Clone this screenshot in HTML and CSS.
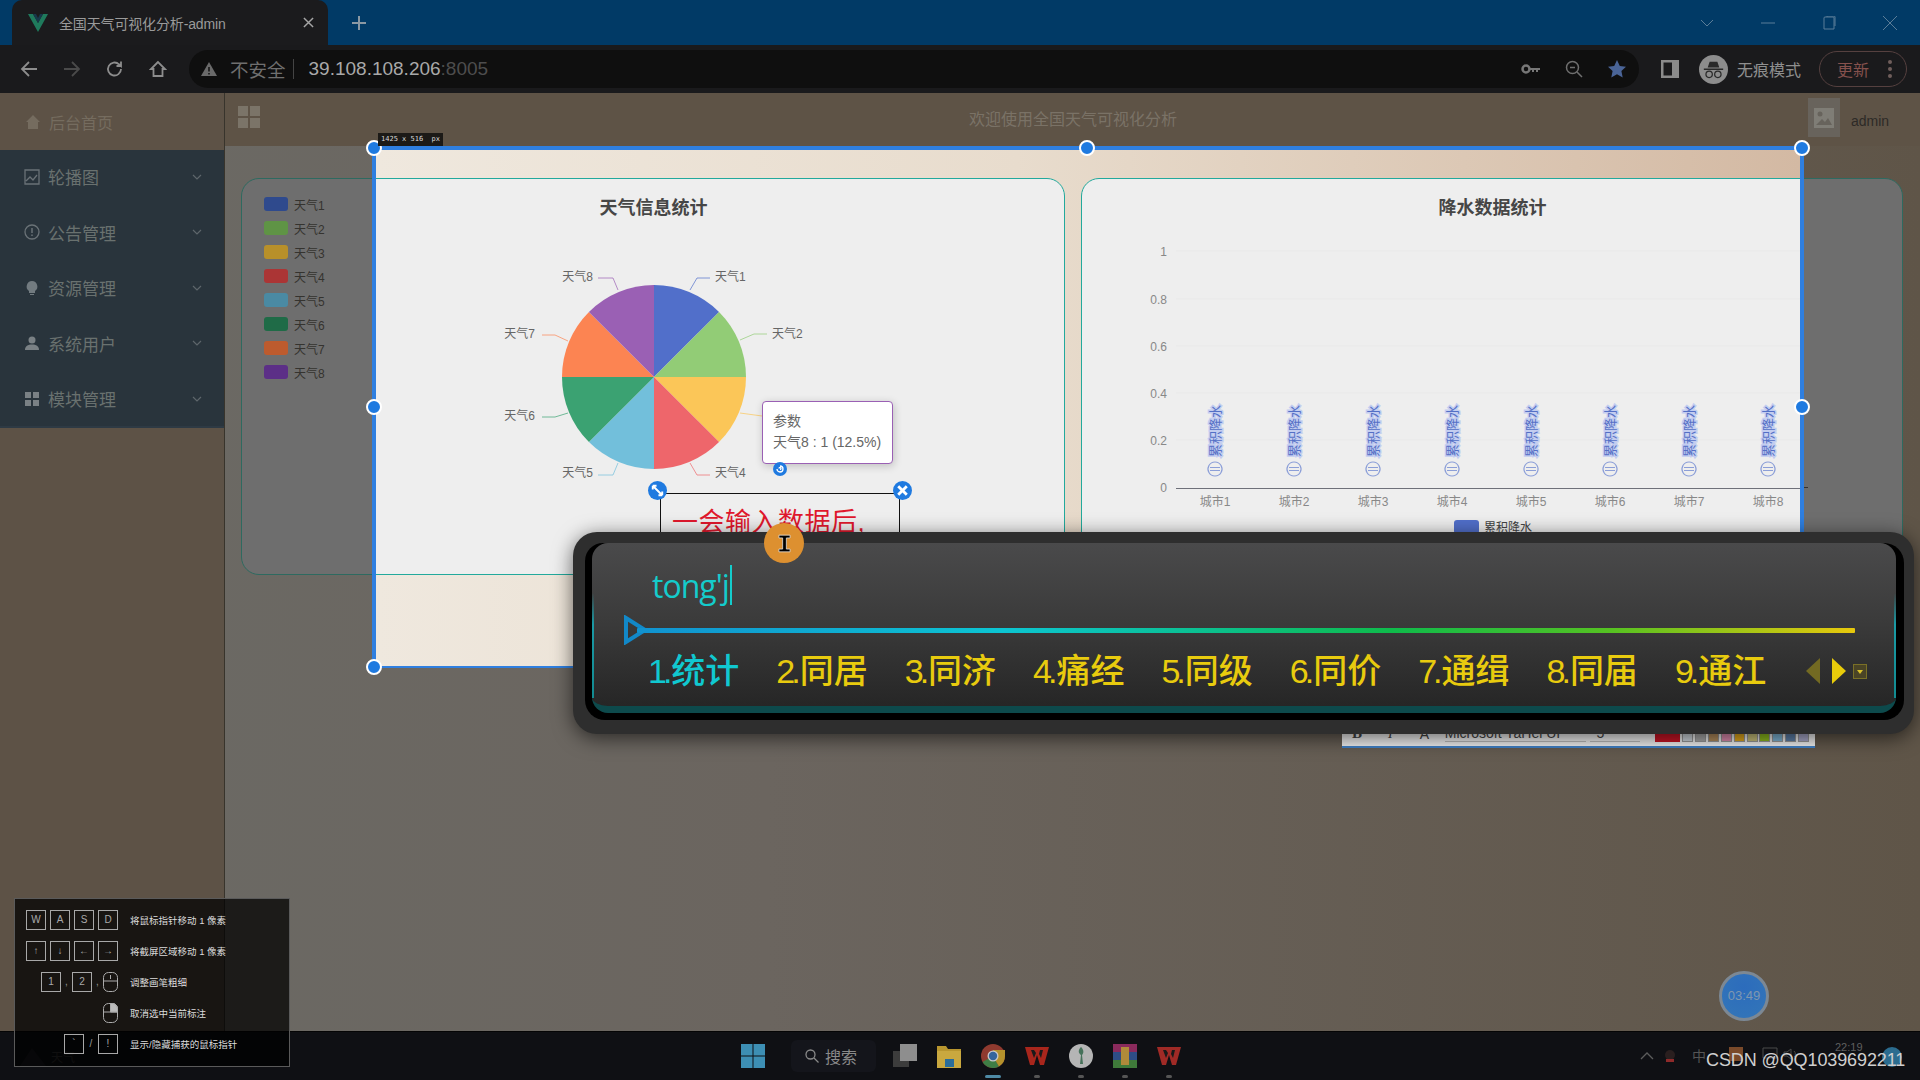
FILE: index.html
```
<!DOCTYPE html>
<html lang="zh-CN">
<head>
<meta charset="utf-8">
<title>全国天气可视化分析-admin</title>
<link rel="stylesheet" href="styles.css">
</head>
<body>
<div class="shell">
  <header class="tabbar">
    <div class="tab">
      <svg class="favicon" viewBox="0 0 20 20"><path d="M0 1h5l5 9 5-9h5L10 19z" fill="#1f7a5c"/><path d="M5 1h3l2 4 2-4h3l-5 9z" fill="#17394a"/></svg>
      <span class="tab-title">全国天气可视化分析-admin</span>
      <svg class="tab-close" viewBox="0 0 12 12"><path d="M1 1l10 10M11 1L1 11"/></svg>
    </div>
    <svg class="tab-plus" viewBox="0 0 16 16"><path d="M8 1v14M1 8h14"/></svg>
    <div class="winctl">
      <svg viewBox="0 0 14 14"><path d="M1 4l6 6 6-6"/></svg>
      <svg viewBox="0 0 14 14"><path d="M0 7h14"/></svg>
      <svg viewBox="0 0 14 14"><path d="M3 1h8a1 1 0 0 1 1 1v11H2V2a1 1 0 0 1 1-1zM5 1V0h7a1 1 0 0 1 1 1v9"/></svg>
      <svg viewBox="0 0 14 14"><path d="M0 0l14 14M14 0L0 14"/></svg>
    </div>
  </header>

  <div class="toolbar">
    <div class="navbtn"><svg viewBox="0 0 18 18"><path d="M17 9H2M9 2L2 9l7 7"/></svg></div>
    <div class="navbtn off"><svg viewBox="0 0 18 18"><path d="M1 9h15M9 2l7 7-7 7"/></svg></div>
    <div class="navbtn"><svg viewBox="0 0 18 18"><path d="M15 9a6.500 6.500 0 1 1-2-4.700L15 6V1.500M15 6h-4.500"/></svg></div>
    <div class="navbtn"><svg viewBox="0 0 18 18"><path d="M9 2L2 9h2.500v7h9V9H16z"/></svg></div>
    <div class="omni">
      <svg class="warn" viewBox="0 0 16 16"><path d="M8 1l8 14H0z" fill="#6a6a6a"/><path d="M8 6v4.500M8 12v1.500" stroke="#111" stroke-width="1.500"/></svg>
      <span class="insecure">不安全</span>
      <i class="omni-sep"></i>
      <span class="host">39.108.108.206</span><span class="port">:8005</span>
      <div class="omni-right">
        <svg class="ic-key" viewBox="0 0 20 12"><circle cx="5" cy="6" r="3.500" fill="none" stroke="#777" stroke-width="2.500"/><path d="M9 5h10v2h-2v2h-2V7h-2v2h-2V7H9z" fill="#777"/></svg>
        <svg class="ic-zoom" viewBox="0 0 18 18"><circle cx="7.500" cy="7.500" r="6"/><path d="M12 12l5 5M5 7.500h5"/></svg>
        <svg class="ic-star" viewBox="0 0 20 20"><path d="M10 1l2.800 6 6.200.7-4.600 4.300 1.300 6.500L10 15.200 4.300 18.500 5.600 12 1 7.700 7.200 7z" fill="#4a6497"/></svg>
      </div>
    </div>
    <svg class="ic-panel" viewBox="0 0 18 18"><path d="M0 0h18v18H0z M2.500 2.500v13H11v-13z" fill="#8b8b8b" fill-rule="evenodd"/></svg>
    <svg class="ic-incog" viewBox="0 0 30 30"><circle cx="15" cy="15" r="15" fill="#8d8d8d"/><path d="M9 13l2-6h8l2 6zM5 14h20v1.500H5z" fill="#2a2a2a"/><circle cx="10.500" cy="20" r="3.300" fill="none" stroke="#2a2a2a" stroke-width="1.300"/><circle cx="19.500" cy="20" r="3.300" fill="none" stroke="#2a2a2a" stroke-width="1.300"/></svg>
    <span class="incog-label">无痕模式</span>
    <div class="update"><span>更新</span><i class="kebab"></i></div>
  </div>

  <div class="page">
    <aside class="sidebar">
      <div class="home-item">
        <svg class="side-ic" viewBox="0 0 16 16"><path d="M8 1L1 8h2v7h10V8h2z" fill="#756c5f"/></svg>
        <span>后台首页</span>
      </div>
      <nav class="menu">
        <div class="menu-item">
          <svg class="side-ic" viewBox="0 0 16 16"><path d="M1 1h14v14H1zM2 12l4-4 3 3 4-5" fill="none" stroke="#6a7277" stroke-width="1.300"/></svg>
          <span>轮播图</span>
          <svg class="chev" viewBox="0 0 10 6"><path d="M1 1l4 4 4-4"/></svg>
        </div>
        <div class="menu-item">
          <svg class="side-ic" viewBox="0 0 16 16"><circle cx="8" cy="8" r="7" fill="none" stroke="#6a7277" stroke-width="1.300"/><path d="M8 4v5M8 10.500V12" stroke="#6a7277" stroke-width="1.500"/></svg>
          <span>公告管理</span>
          <svg class="chev" viewBox="0 0 10 6"><path d="M1 1l4 4 4-4"/></svg>
        </div>
        <div class="menu-item">
          <svg class="side-ic" viewBox="0 0 16 16"><path d="M8 1a5.500 5.500 0 0 0-3 10v2h6v-2A5.500 5.500 0 0 0 8 1zM6 14h4v1H6z" fill="#727b80"/></svg>
          <span>资源管理</span>
          <svg class="chev" viewBox="0 0 10 6"><path d="M1 1l4 4 4-4"/></svg>
        </div>
        <div class="menu-item">
          <svg class="side-ic" viewBox="0 0 16 16"><circle cx="8" cy="5" r="3.500" fill="#7a8185"/><path d="M1 15c0-4 3-5.500 7-5.500s7 1.500 7 5.500z" fill="#7a8185"/></svg>
          <span>系统用户</span>
          <svg class="chev" viewBox="0 0 10 6"><path d="M1 1l4 4 4-4"/></svg>
        </div>
        <div class="menu-item">
          <svg class="side-ic" viewBox="0 0 16 16"><path d="M1 1h6v6H1zM9 1h6v6H9zM1 9h6v6H1zM9 9h6v6H9z" fill="#7a8185"/></svg>
          <span>模块管理</span>
          <svg class="chev" viewBox="0 0 10 6"><path d="M1 1l4 4 4-4"/></svg>
        </div>
      </nav>
    </aside>

    <main class="main">
      <div class="topbar">
        <svg class="grid-ic" viewBox="0 0 22 22"><path d="M0 0h10v10H0zM12 0h10v10H12zM0 12h10v10H0zM12 12h10v10H12z" fill="#7b7468"/></svg>
        <div class="welcome">欢迎使用全国天气可视化分析</div>
        <div class="avatar"><svg viewBox="0 0 20 20"><path d="M0 0h20v20H0z" fill="#7f7d76"/><circle cx="6" cy="6" r="2.500" fill="#67635c"/><path d="M2 17l6-6 3 3 3-4 4 7z" fill="#67635c"/></svg></div>
        <span class="admin">admin</span>
      </div>
      <div class="cards">
        <section class="card">
          <ul class="legend">
            <li><i class="sw s1"></i>天气1</li>
            <li><i class="sw s2"></i>天气2</li>
            <li><i class="sw s3"></i>天气3</li>
            <li><i class="sw s4"></i>天气4</li>
            <li><i class="sw s5"></i>天气5</li>
            <li><i class="sw s6"></i>天气6</li>
            <li><i class="sw s7"></i>天气7</li>
            <li><i class="sw s8"></i>天气8</li>
          </ul>
        </section>
        <section class="card"></section>
      </div>
    </main>
  </div>

  <footer class="taskbar">
    <div class="weather">
      <svg viewBox="0 0 26 20"><path d="M0 20L12 2l14 18z" fill="#1c1d24"/></svg>
      <span>天气</span>
    </div>
    <svg class="win" viewBox="0 0 24 24"><path d="M0 0h11.500v11.500H0zM12.500 0H24v11.500H12.500zM0 12.500h11.500V24H0zM12.500 12.500H24V24H12.500z" fill="#3d8fb4"/></svg>
    <div class="search">
      <svg viewBox="0 0 14 14"><circle cx="5.500" cy="5.500" r="4.500"/><path d="M9 9l4.500 4.500"/></svg>
      <span>搜索</span>
    </div>
    <div class="tb-icons">
      <div class="tb-app"><svg viewBox="0 0 24 24"><path d="M0 7h16v16H0z" fill="#3c3c3c"/><path d="M7 0h17v17H7z" fill="#8e8e8e"/></svg></div>
      <div class="tb-app"><svg viewBox="0 0 24 24"><path d="M0 2h9l2 3h13v19H0z" fill="#b8962f"/><path d="M0 7h24v17H0z" fill="#c9a83f"/><path d="M8 15h9v8H8z" fill="#2a6d9a"/></svg></div>
      <div class="tb-app on"><svg viewBox="0 0 24 24"><circle cx="12" cy="12" r="12" fill="#8f3a2f"/><path d="M12 12L1.600 18A12 12 0 0 0 18 22.400z" fill="#3f7d45"/><path d="M12 12l6 10.400A12 12 0 0 0 24 12V6H12z" fill="#b5922c"/><circle cx="12" cy="12" r="5.500" fill="#c9c9c9"/><circle cx="12" cy="12" r="4.200" fill="#35659c"/></svg></div>
      <div class="tb-app dot"><svg viewBox="0 0 24 24"><path d="M0 3h24l-5 18h-4l-3-10-3 10H5z" fill="#a8261c"/><path d="M6 6l3 8 2-5-2-3zM18 6h-3l-1 4 2 4z" fill="#1a1a1a"/></svg></div>
      <div class="tb-app dot"><svg viewBox="0 0 24 24"><circle cx="12" cy="12" r="12" fill="#b5b5b5"/><path d="M12 3c3 3 3 6 1 8l1 9h-3l1-9c-3-2-3-5 0-8z" fill="#46725a"/></svg></div>
      <div class="tb-app dot"><svg viewBox="0 0 24 24"><path d="M0 0h24v8H0z" fill="#8a2a5c"/><path d="M0 8h24v8H0z" fill="#2e4d86"/><path d="M0 16h24v8H0z" fill="#3f7a3a"/><path d="M8 3h8v18H8z" fill="#b08a3a"/></svg></div>
      <div class="tb-app dot"><svg viewBox="0 0 24 24"><path d="M0 3h24l-5 18h-4l-3-10-3 10H5z" fill="#a02a26"/><path d="M6 6l3 8 2-5-2-3zM18 6h-3l-1 4 2 4z" fill="#1a1a1a"/></svg></div>
    </div>
    <div class="tray">
      <svg class="caret" viewBox="0 0 14 8"><path d="M1 7l6-6 6 6"/></svg>
      <svg class="t-qq" viewBox="0 0 14 14"><circle cx="7" cy="6" r="5" fill="#2a1f1f"/><path d="M3 10h8v3H3z" fill="#8f2a2a"/></svg>
      <span class="t-ime">中</span>
      <svg class="t-sq" viewBox="0 0 14 14"><path d="M0 0h14v14H0z" fill="#7a4a2a"/></svg>
      <svg class="t-mon" viewBox="0 0 16 14"><path d="M1 1h14v10H1z"/></svg>
      <svg class="t-vol" viewBox="0 0 16 14"><path d="M1 5h3l4-3v10L4 9H1zM11 4a4 4 0 0 1 0 6"/></svg>
      <span class="t-time">22:19</span>
      <span class="t-badge"></span>
    </div>
  </footer>

  <div class="selection">
    <div class="clip">
      <div class="bright">
        <section class="bcard">
          <h2 class="ctitle">天气信息统计</h2>
          <svg class="chart" viewBox="0 0 823 397">
            <path d="M412 199L412 107A92 92 0 0 1 477.050 133.950Z" fill="#516fca"/>
            <path d="M412 199L477.050 133.950A92 92 0 0 1 504 199Z" fill="#92cc76"/>
            <path d="M412 199L504 199A92 92 0 0 1 477.050 264.050Z" fill="#fbc658"/>
            <path d="M412 199L477.050 264.050A92 92 0 0 1 412 291Z" fill="#ee666b"/>
            <path d="M412 199L412 291A92 92 0 0 1 346.950 264.050Z" fill="#72bfdb"/>
            <path d="M412 199L346.950 264.050A92 92 0 0 1 320 199Z" fill="#3ba272"/>
            <path d="M412 199L320 199A92 92 0 0 1 346.950 133.950Z" fill="#fc8452"/>
            <path d="M412 199L346.950 133.950A92 92 0 0 1 412 107Z" fill="#9a60b4"/>
            <g class="leaders">
              <path d="M448 112L455 100H468" stroke="#516fca"/>
              <path d="M498 162L512 156H525" stroke="#92cc76"/>
              <path d="M498 235L520 238" stroke="#fbc658"/>
              <path d="M448 285L455 297H468" stroke="#ee666b"/>
              <path d="M376 285L371 297H356" stroke="#72bfdb"/>
              <path d="M326 235L313 239H300" stroke="#3ba272"/>
              <path d="M326 163L313 157H300" stroke="#fc8452"/>
              <path d="M376 112L371 100H356" stroke="#9a60b4"/>
            </g>
            <g class="plabels">
              <text x="473" y="103">天气1</text>
              <text x="530" y="160">天气2</text>
              <text x="473" y="299">天气4</text>
              <text x="351" y="299" text-anchor="end">天气5</text>
              <text x="293" y="242" text-anchor="end">天气6</text>
              <text x="293" y="160" text-anchor="end">天气7</text>
              <text x="351" y="103" text-anchor="end">天气8</text>
            </g>
          </svg>
        </section>
        <section class="bcard">
          <h2 class="ctitle">降水数据统计</h2>
          <svg class="chart" viewBox="0 0 823 397">
            <g class="gridl">
              <path d="M95 73H727M95 121H727M95 168H727M95 215H727M95 262H727"/>
            </g>
            <path class="axis" d="M95 310.500H727"/>
            <g class="ylabels">
              <text x="86" y="78">1</text>
              <text x="86" y="126">0.8</text>
              <text x="86" y="173">0.6</text>
              <text x="86" y="220">0.4</text>
              <text x="86" y="267">0.2</text>
              <text x="86" y="314">0</text>
            </g>
            <g class="xlabels">
              <text x="134" y="328">城市1</text>
              <text x="213" y="328">城市2</text>
              <text x="292" y="328">城市3</text>
              <text x="371" y="328">城市4</text>
              <text x="450" y="328">城市5</text>
              <text x="529" y="328">城市6</text>
              <text x="608" y="328">城市7</text>
              <text x="687" y="328">城市8</text>
            </g>
            <g class="barlabels">
              <text transform="translate(139 279) rotate(-90)">累积降水</text>
              <text transform="translate(218 279) rotate(-90)">累积降水</text>
              <text transform="translate(297 279) rotate(-90)">累积降水</text>
              <text transform="translate(376 279) rotate(-90)">累积降水</text>
              <text transform="translate(455 279) rotate(-90)">累积降水</text>
              <text transform="translate(534 279) rotate(-90)">累积降水</text>
              <text transform="translate(613 279) rotate(-90)">累积降水</text>
              <text transform="translate(692 279) rotate(-90)">累积降水</text>
            </g>
            <g class="zeros">
              <path d="M134 284a7 7 0 1 0 .01 0zM129 289.500h10M129 292.500h10"/>
              <path d="M213 284a7 7 0 1 0 .01 0zM208 289.500h10M208 292.500h10"/>
              <path d="M292 284a7 7 0 1 0 .01 0zM287 289.500h10M287 292.500h10"/>
              <path d="M371 284a7 7 0 1 0 .01 0zM366 289.500h10M366 292.500h10"/>
              <path d="M450 284a7 7 0 1 0 .01 0zM445 289.500h10M445 292.500h10"/>
              <path d="M529 284a7 7 0 1 0 .01 0zM524 289.500h10M524 292.500h10"/>
              <path d="M608 284a7 7 0 1 0 .01 0zM603 289.500h10M603 292.500h10"/>
              <path d="M687 284a7 7 0 1 0 .01 0zM682 289.500h10M682 292.500h10"/>
            </g>
            <rect x="373" y="342" width="25" height="14" rx="3" fill="#516fca"/>
            <text class="blegend" x="403" y="354">累积降水</text>
          </svg>
        </section>
      </div>
    </div>
    <i class="h h-tl"></i><i class="h h-t"></i><i class="h h-tr"></i>
    <i class="h h-l"></i><i class="h h-r"></i><i class="h h-bl"></i>
    <i class="axis-tail"></i>
    <span class="sizetag">1425 x 516&nbsp;&nbsp;px</span>
  </div>

  <div class="tooltip">
    <div>参数</div>
    <div>天气8 : 1 (12.5%)</div>
  </div>
  <svg class="swirl" viewBox="0 0 14 14"><circle cx="7" cy="7" r="7" fill="#1f7ae0"/><path d="M7 4a3 3 0 1 1-3 3M7 7.500a1 1 0 1 0-1-1" fill="none" stroke="#fff" stroke-width="1.300"/></svg>

  <div class="note">
    <span>一会输入数据后,</span>
    <svg class="note-h nh-l" viewBox="0 0 20 20"><circle cx="10" cy="10" r="10" fill="#1f7ae0"/><path d="M5 5l10 10M5 5h4M5 5v4M15 15h-4M15 15v-4" stroke="#fff" stroke-width="2" fill="none"/></svg>
    <svg class="note-h nh-r" viewBox="0 0 20 20"><circle cx="10" cy="10" r="10" fill="#1f7ae0"/><path d="M5.500 5.500l9 9M14.500 5.500l-9 9" stroke="#fff" stroke-width="3"/></svg>
  </div>

  <div class="anno-tools">
    <b class="at-b">B</b><i class="at-i">I</i><span class="at-a">A</span>
    <span class="at-font">Microsoft YaHei UI</span>
    <span class="at-size">5</span>
    <span class="at-red"></span>
    <span class="at-c c1"></span><span class="at-c c2"></span><span class="at-c c3"></span><span class="at-c c4"></span><span class="at-c c5"></span><span class="at-c c6"></span><span class="at-c c7"></span><span class="at-c c8"></span><span class="at-c c9"></span><span class="at-c c10"></span>
  </div>

  <div class="ime">
    <div class="ime-trim">
      <div class="ime-face">
        <div class="ime-input"><span>tong'j</span><i class="caret-bar"></i></div>
        <div class="ime-rule">
          <svg viewBox="0 0 24 30"><path d="M2 3l19 12L2 27z" fill="none" stroke="#1288c8" stroke-width="4"/></svg>
          <i class="ime-line"></i>
        </div>
        <div class="ime-cands">
          <span class="cand first"><em>1.</em>统计</span>
          <span class="cand"><em>2.</em>同居</span>
          <span class="cand"><em>3.</em>同济</span>
          <span class="cand"><em>4.</em>痛经</span>
          <span class="cand"><em>5.</em>同级</span>
          <span class="cand"><em>6.</em>同价</span>
          <span class="cand"><em>7.</em>通缉</span>
          <span class="cand"><em>8.</em>同届</span>
          <span class="cand"><em>9.</em>通江</span>
          <div class="ime-pager">
            <i class="pg-l"></i><i class="pg-r"></i>
            <i class="pg-menu"></i>
          </div>
        </div>
      </div>
    </div>
  </div>

  <div class="pointer">
    <svg viewBox="0 0 14 20"><path d="M1 1h12v3H9v12h4v3H1v-3h4V4H1z" fill="#000" stroke="#e8e8e8" stroke-width=".8"/></svg>
  </div>

  <div class="keys">
    <div class="k-row"><div class="k-col"><kbd>W</kbd><kbd>A</kbd><kbd>S</kbd><kbd>D</kbd></div><span>将鼠标指针移动 1 像素</span></div>
    <div class="k-row"><div class="k-col"><kbd>↑</kbd><kbd>↓</kbd><kbd>←</kbd><kbd>→</kbd></div><span>将截屏区域移动 1 像素</span></div>
    <div class="k-row"><div class="k-col"><kbd>1</kbd><b>,</b><kbd>2</kbd><b>,</b><svg class="mouse" viewBox="0 0 15 20"><rect x=".5" y=".5" width="14" height="19" rx="5"/><path d="M.5 9h14M7.500 3v4"/></svg></div><span>调整画笔粗细</span></div>
    <div class="k-row"><div class="k-col"><svg class="mouse" viewBox="0 0 15 20"><path d="M7.500.5h2a5 5 0 0 1 5 5V9h-7z" fill="#bbb"/><rect x=".5" y=".5" width="14" height="19" rx="5"/><path d="M.5 9h14M7.500 .5V9"/></svg></div><span>取消选中当前标注</span></div>
    <div class="k-row"><div class="k-col"><kbd>`</kbd><b class="slash">/</b><kbd>!</kbd></div><span>显示/隐藏捕获的鼠标指针</span></div>
  </div>

  <div class="timer">03:49</div>
  <div class="watermark">CSDN @QQ1039692211</div>
</div>
</body>
</html>
```
FILE: styles.css
```
* { box-sizing: border-box; }
html, body { margin: 0; padding: 0; background: #5e5346; }
body { overflow: hidden; font-family: "Liberation Sans", "Noto Sans CJK SC", sans-serif; }
ul { margin: 0; padding: 0; list-style: none; }
svg { display: block; flex: none; }
.shell { position: relative; width: 1920px; height: 1080px; display: flex; flex-direction: column; overflow: hidden; }

/* browser chrome */
.tabbar { height: 45px; flex: none; background: #013a66; display: flex; align-items: flex-end; padding-left: 12px; }
.tab { width: 316px; height: 45px; background: #1b1b1d; border-radius: 10px 10px 0 0; display: flex; align-items: center; padding: 0 14px 0 16px; }
.favicon { width: 20px; height: 20px; margin-right: 11px; }
.tab-title { color: #9a9a9a; font-size: 14px; letter-spacing: -.15px; white-space: nowrap; flex: 1; }
.tab-close { width: 11px; height: 11px; stroke: #a5a5a5; stroke-width: 1.600; fill: none; }
.tab-plus { width: 16px; height: 16px; margin: 0 0 14px 23px; stroke: #8b98a3; stroke-width: 2; fill: none; }
.winctl { margin-left: auto; display: flex; gap: 47px; align-self: center; padding-right: 23px; }
.winctl svg { width: 14px; height: 14px; stroke: #5b7d98; fill: none; stroke-width: 1; }
.toolbar { height: 48px; flex: none; background: #1a1a1c; display: flex; align-items: center; padding-left: 7px; }
.navbtn { width: 43px; display: flex; justify-content: center; }
.navbtn svg { width: 18px; height: 18px; stroke: #8d8d8d; fill: none; stroke-width: 1.800; }
.navbtn.off svg { stroke: #4a4a4a; }
.omni { width: 1450px; height: 38px; margin-left: 10px; border-radius: 19px; background: #0f0f0f; display: flex; align-items: center; padding-left: 12px; }
.warn { width: 16px; height: 16px; margin-right: 13px; }
.insecure { font-size: 18.500px; color: #6f6f6f; }
.omni-sep { width: 1px; height: 20px; background: #444; margin: 0 15px 0 7px; }
.host { font-size: 19px; color: #a9a9a9; }
.port { font-size: 19px; color: #4d4d4d; }
.omni-right { margin-left: auto; display: flex; align-items: center; gap: 24px; padding-right: 12px; }
.ic-key { width: 20px; height: 12px; }
.ic-zoom { width: 18px; height: 20px; stroke: #6f6f6f; fill: none; stroke-width: 1.500; }
.ic-star { width: 20px; height: 20px; }
.ic-panel { width: 18px; height: 20px; margin-left: 22px; }
.ic-incog { width: 29px; height: 29px; margin-left: 20px; }
.incog-label { color: #8f8f8f; font-size: 16px; margin-left: 9px; white-space: nowrap; }
.update { width: 88px; height: 36px; margin-left: 18px; border: 1.500px solid #55403f; border-radius: 18px; display: flex; align-items: center; padding-left: 17px; color: #85514d; font-size: 16px; position: relative; }
.kebab { width: 4px; height: 4px; border-radius: 50%; background: #6f5e5b; margin-left: 19px; box-shadow: 0 -7px #6f5e5b, 0 7px #6f5e5b; }

/* page */
.page { flex: 1; min-height: 0; display: flex; background: linear-gradient(90deg, #6b6a65 0%, #6b655f 40%, #5f5548 100%); }
.sidebar { width: 225px; flex: none; background: #5d5246; border-right: 1px solid #38342c; }
.home-item { height: 57px; display: flex; align-items: center; padding-left: 25px; color: #756c5f; font-size: 16px; gap: 8px; }
.side-ic { width: 16px; height: 16px; }
.menu { background: #29343c; height: 278px; margin-top: 0; box-shadow: inset 0 -2px #2e3a44; }
.menu-item { height: 55.500px; display: flex; align-items: center; padding: 0 22px 2px 24px; color: #69716f; font-size: 17px; gap: 8px; }
.menu-item span { flex: 1; }
.chev { width: 10px; height: 6px; stroke: #5e666b; fill: none; stroke-width: 1.200; }
.main { flex: 1; min-width: 0; display: flex; flex-direction: column; }
.topbar { height: 53px; flex: none; background: #5e5346; display: flex; align-items: center; position: relative; padding-left: 13px; }
.grid-ic { width: 22px; height: 22px; margin-top: -6px; }
.welcome { position: absolute; left: 1px; right: 0; text-align: center; color: #7a7266; font-size: 16px; margin-top: -4px; }
.avatar { position: absolute; left: 1583px; top: 5px; width: 32px; height: 39px; background: #68635c; display: flex; align-items: center; justify-content: center; }
.avatar svg { width: 20px; height: 20px; }
.admin { position: absolute; left: 1626px; top: 20px; color: #2d2a27; font-size: 14px; }
.cards { display: grid; grid-template-columns: 823px 823px; column-gap: 16px; padding: 32px 0 0 16px; }
.card { height: 397px; background: #6e6e6e; border: 1px solid #2e6a60; border-radius: 18px; }
.legend { padding: 13px 0 0 22px; display: flex; flex-direction: column; }
.legend li { height: 24px; display: flex; align-items: center; font-size: 12px; color: #35332f; gap: 6px; }
.sw { width: 24px; height: 14px; border-radius: 3px; display: block; }
.s1 { background: #2f4a8d; } .s2 { background: #5f9445; } .s3 { background: #b8902a; } .s4 { background: #ab3535; }
.s5 { background: #4a8aa3; } .s6 { background: #1f6b47; } .s7 { background: #bd5b2e; } .s8 { background: #5c2f87; }

/* taskbar */
.taskbar { height: 49px; flex: none; background: #0f1014; display: flex; align-items: center; border-top: 1px solid #050505; position: relative; }
.weather { width: 741px; flex: none; display: flex; align-items: center; gap: 5px; padding-left: 20px; color: #3a3a3a; font-size: 12px; }
.weather svg { width: 26px; height: 20px; }
.win { width: 24px; height: 24px; }
.search { width: 85px; height: 32px; margin-left: 26px; border-radius: 6px; background: #14151b; display: flex; align-items: center; gap: 6px; padding-left: 14px; color: #8a8a8a; font-size: 16px; }
.search svg { width: 14px; height: 14px; stroke: #8a8a8a; fill: none; stroke-width: 1.300; }
.tb-icons { display: flex; gap: 20px; margin-left: 17px; }
.tb-app { width: 24px; height: 24px; position: relative; }
.tb-app svg { width: 24px; height: 24px; }
.tb-app.on::after { content: ""; position: absolute; left: 4px; right: 4px; bottom: -10px; height: 3px; border-radius: 2px; background: #4e8aa5; }
.tb-app.dot::after { content: ""; position: absolute; left: 9px; right: 9px; bottom: -10px; height: 3px; border-radius: 2px; background: #555; }
.tray { position: absolute; left: 1640px; top: 0; bottom: 0; width: 280px; display: flex; align-items: center; }
.caret { width: 14px; height: 8px; stroke: #5c5c5c; fill: none; stroke-width: 1.300; }
.t-qq { width: 14px; height: 14px; margin-left: 9px; }
.t-ime { color: #555; font-size: 14px; margin-left: 15px; margin-top: -3px; }
.t-sq { width: 14px; height: 14px; margin-left: 23px; margin-top: -4px; }
.t-mon { width: 16px; height: 14px; margin-left: 19px; stroke: #4a4a4a; fill: none; margin-top: -4px; }
.t-vol { width: 16px; height: 14px; margin-left: 5px; stroke: #4a4a4a; fill: none; margin-top: -4px; }
.t-time { color: #5f5f5f; font-size: 11px; margin-left: 36px; margin-top: -18px; }
.t-badge { width: 20px; height: 20px; border-radius: 50%; background: #2b6c8f; margin-left: 19px; margin-top: 2px; }

/* screenshot selection */
.selection { position: absolute; left: 372px; top: 146px; width: 1432px; height: 522px; border: solid #2f7fe0; border-width: 4px 4px 2px 4px; }
.clip { position: absolute; inset: 0; overflow: hidden; background: linear-gradient(90deg, #efe8de 0%, #e8dccd 45%, #d3b9a3 100%); }
.bright { position: absolute; left: -134px; top: 28px; display: grid; grid-template-columns: 823px 823px; column-gap: 16px; }
.bcard { position: relative; height: 397px; background: #eeeeee; border: 1px solid #22a99c; border-radius: 18px; }
.ctitle { margin: 0; text-align: center; font-size: 18px; font-weight: 700; color: #464646; padding-top: 16px; line-height: 26px; }
.chart { position: absolute; left: -1px; top: -1px; width: 823px; height: 397px; }
.leaders path { fill: none; stroke-width: 1; opacity: .7; }
.plabels text { font-size: 12px; fill: #666; }
.gridl path { stroke: #e9e9e9; fill: none; }
.axis { stroke: #6e7079; fill: none; }
.ylabels text { font-size: 12px; fill: #888; text-anchor: end; }
.xlabels text { font-size: 12px; fill: #888; text-anchor: middle; }
.barlabels text { font-size: 13px; fill: #5470c6; stroke: #c3cdf0; stroke-width: 3px; paint-order: stroke; }
.zeros path { fill: none; stroke: #8c9fd8; stroke-width: 1.200; }
.blegend { font-size: 12px; fill: #444; }
.h { position: absolute; width: 16px; height: 16px; border-radius: 50%; background: #1f7ae0; border: 2px solid #fff; display: block; }
.h-tl { left: -10px; top: -10px; }
.h-t { left: 703px; top: -10px; }
.h-tr { right: -10px; top: -10px; }
.h-l { left: -10px; top: 249px; }
.h-r { right: -10px; top: 249px; }
.h-bl { left: -10px; bottom: -9px; }
.axis-tail { position: absolute; right: -8px; top: 337px; width: 4px; height: 1px; background: #333; display: block; }
.sizetag { position: absolute; left: 2px; top: -17px; height: 13px; padding: 0 3px; background: #1c1a17; color: #d8d8d8; font-size: 7px; line-height: 13px; font-family: "DejaVu Sans Mono", monospace; white-space: nowrap; }

.tooltip { position: absolute; left: 762px; top: 401px; width: 131px; height: 63px; padding: 9px 10px; background: #fff; border: 1px solid #9a60b4; border-radius: 4px; font-size: 14px; line-height: 21px; color: #666; box-shadow: 1px 2px 8px rgba(0,0,0,.2); white-space: nowrap; }
.swirl { position: absolute; left: 773px; top: 462px; width: 14px; height: 14px; }

.note { position: absolute; left: 660px; top: 493px; width: 240px; height: 90px; border: solid #111; border-width: 1px 1px 0; color: #e0182d; font-size: 26px; letter-spacing: .5px; line-height: 36px; padding: 10px 0 0 11px; white-space: nowrap; }
.note-h { position: absolute; width: 19px; height: 19px; top: -13px; }
.nh-l { left: -13px; }
.nh-r { right: -13px; }

.anno-tools { position: absolute; left: 1342px; top: 722px; width: 473px; height: 26px; background: #efefef; border-bottom: 2px solid #3f7fc4; display: flex; align-items: flex-end; padding: 0 6px 4px 10px; font-size: 14px; color: #444; }
.at-b { font-family: "Liberation Serif", serif; font-size: 15px; width: 36px; }
.at-i { font-family: "Liberation Serif", serif; width: 32px; font-size: 14px; }
.at-a { width: 25px; }
.at-font { width: 142px; border-bottom: 1px solid #bbb; }
.at-size { width: 50px; padding-left: 6px; border-bottom: 1px solid #bbb; margin-left: 4px; }
.at-red { width: 25px; height: 16px; background: #c81425; margin-left: 15px; }
.at-c { width: 11px; height: 16px; margin-left: 1.900px; border: 1px solid #999; }
.c1 { background: #cfd6dc; } .c2 { background: #a9a9a9; } .c3 { background: #b28c5c; } .c4 { background: #dd8bad; } .c5 { background: #dfa61c; }
.c6 { background: #c9c07b; } .c7 { background: #8dba1d; } .c8 { background: #7eb4d4; } .c9 { background: #5d7ea6; } .c10 { background: #a8a8c9; }

/* IME */
.ime { position: absolute; left: 573px; top: 532px; width: 1341px; height: 202px; padding: 11px 10px 14px 12px; background: #2e2e2e; border-radius: 24px; box-shadow: 0 4px 20px rgba(0,0,0,.6); }
.ime-trim { height: 100%; padding: 0 8px 7px 7px; background: #000; border-radius: 20px; border-top-left-radius: 18px; }
.ime-face { position: relative; height: 100%; padding: 20px 0 0 56px; border-bottom: 7px solid #0d4a4c; border-radius: 16px; background: linear-gradient(180deg, #4a4a4b 0%, #3a3a3a 50%, #262626 100%); }
.ime-face::before, .ime-face::after { content: ""; position: absolute; top: 50px; bottom: 8px; width: 2px; background: linear-gradient(180deg, transparent, #1a9aa5 30%, #128a90 100%); }
.ime-face::before { left: 0; }
.ime-face::after { right: 0; }
.ime-input { height: 44px; display: flex; align-items: center; padding-left: 4px; color: #14cccc; font-size: 32px; letter-spacing: -1px; font-family: "Open Sans", "Liberation Sans", sans-serif; font-weight: 400; }
.caret-bar { width: 2px; height: 40px; background: #14cccc; display: block; margin-left: 1px; }
.ime-rule { display: flex; align-items: center; height: 30px; margin: 8px 0 0 -24px; }
.ime-rule svg { width: 24px; height: 30px; }
.ime-line { display: block; width: 1218px; height: 5px; margin-left: -11px; border-radius: 1px; background: linear-gradient(90deg, #1192d0 0%, #0cc5d2 30%, #0bc08a 48%, #0fbb4b 62%, #56c222 80%, #e8c80c 100%); }
.ime-cands { display: flex; align-items: center; height: 50px; margin-top: 1px; gap: 37px; padding-right: 29px; }
.cand { color: #e8cb0e; font-size: 34px; line-height: 50px; white-space: nowrap; font-weight: 500; }
.cand.first { color: #10c8d0; }
.cand em { font-style: normal; letter-spacing: -4px; margin-right: 3px; }
.ime-pager { margin-left: auto; display: flex; align-items: center; }
.pg-l { width: 0; height: 0; border: solid transparent; border-width: 13px 14px 13px 0; border-right-color: #736a22; display: block; }
.pg-r { width: 0; height: 0; border: solid transparent; border-width: 13px 0 13px 14px; border-left-color: #e8cb0a; display: block; margin-left: 12px; }
.pg-menu { width: 14px; height: 15px; border: 1px solid #7a7026; margin-left: 7px; display: block; position: relative; background: #4a4426; }
.pg-menu::after { content: ""; position: absolute; left: 3px; top: 5px; border: solid transparent; border-width: 4px 3px 0; border-top-color: #d8c02a; }

.pointer { position: absolute; left: 764px; top: 523px; width: 40px; height: 40px; border-radius: 50%; background: #dd9030; display: flex; align-items: center; justify-content: center; }
.pointer svg { width: 13px; height: 19px; }

/* shortcut panel */
.keys { position: absolute; left: 14px; top: 898px; width: 276px; height: 169px; background: rgba(0,0,0,.74); border: 1px solid #5a5a5a; display: flex; flex-direction: column; padding-top: 5px; }
.k-row { height: 31px; display: flex; align-items: center; color: #dcdcdc; font-size: 9.500px; }
.k-col { width: 103px; flex: none; display: flex; justify-content: flex-end; align-items: center; gap: 4px; margin-right: 12px; }
kbd { width: 20px; height: 20px; border: 1px solid #a8a8a8; display: flex; align-items: center; justify-content: center; font: 10px "Liberation Sans", sans-serif; color: #aaa; }
.k-col b { font-weight: 400; color: #999; font-size: 10px; width: 3px; }
.k-col b.slash { width: 6px; text-align: center; }
.mouse { width: 15px; height: 20px; fill: none; stroke: #aaa; stroke-width: 1; }

.timer { position: absolute; left: 1719px; top: 971px; width: 50px; height: 50px; border-radius: 50%; border: 3px solid #7c8894; background: radial-gradient(circle at 50% 30%, #2c6cbc, #3376b8); color: #7f97b0; font-size: 13px; line-height: 44px; text-align: center; }
.watermark { position: absolute; left: 1706px; top: 1050px; color: #cfcfcf; font-size: 18px; letter-spacing: -.1px; line-height: 20px; white-space: nowrap; }
```
